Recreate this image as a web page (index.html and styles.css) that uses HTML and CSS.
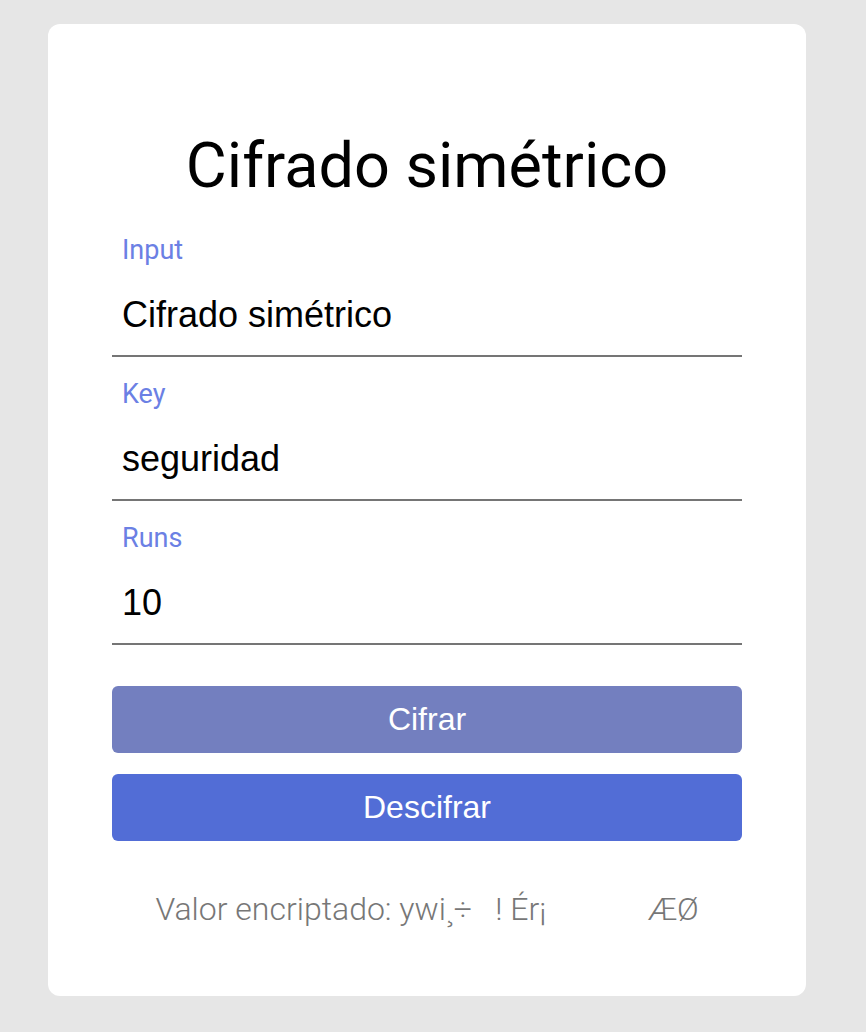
FILE: index.html
```html
<!DOCTYPE html>
<html lang="es">
<head>
<meta charset="utf-8">
<title>Cifrado simétrico</title>
<link rel="stylesheet" href="styles.css">
</head>
<body>
<main class="card">
  <h1 class="title">Cifrado simétrico</h1>
  <form class="form">
    <div class="field">
      <label class="label" for="input">Input</label>
      <input class="control" id="input" type="text" value="Cifrado simétrico">
    </div>
    <div class="field">
      <label class="label" for="key">Key</label>
      <input class="control" id="key" type="text" value="seguridad">
    </div>
    <div class="field">
      <label class="label" for="runs">Runs</label>
      <input class="control" id="runs" type="text" value="10">
    </div>
    <div class="actions">
      <button class="btn btn-encrypt" type="button">Cifrar</button>
      <button class="btn btn-decrypt" type="button">Descifrar</button>
    </div>
  </form>
  <p class="result">Valor encriptado: ywi¸÷&nbsp;&nbsp; ! Ér¡&nbsp;&nbsp;&nbsp;&nbsp;&nbsp;&nbsp;&nbsp;&nbsp;&nbsp;&nbsp;&nbsp;&nbsp; ÆØ</p>
</main>
</body>
</html>
```

FILE: styles.css
```css
html, body {
  margin: 0;
  padding: 0;
  background: #e6e6e6;
}

body {
  padding: 24px 0 36px 48px;
  font-family: Roboto, "Liberation Sans", sans-serif;
}

.card {
  box-sizing: border-box;
  width: 758px;
  background: #ffffff;
  border-radius: 12px;
  padding: 103px 64px 69px;
}

.title {
  margin: 0;
  font-family: Roboto, sans-serif;
  font-weight: 400;
  font-size: 63px;
  line-height: 77px;
  text-align: center;
  color: #000;
}

.form {
  margin: 30px 0 0;
}

.field {
  margin-top: 21px;
}

.field:first-child {
  margin-top: 0;
}

.label {
  display: block;
  padding-left: 10px;
  font-family: Roboto, sans-serif;
  font-size: 27px;
  line-height: 32px;
  color: #6b80e4;
}

.control {
  display: block;
  box-sizing: border-box;
  width: 100%;
  height: 91px;
  margin: 0;
  padding: 29px 10px 20px;
  border: 0;
  border-bottom: 2px solid #757575;
  background: transparent;
  font-family: "Liberation Sans", Arial, sans-serif;
  font-size: 36px;
  line-height: 40px;
  color: #000;
  outline: none;
}

.actions {
  display: flex;
  flex-direction: column;
  gap: 21px;
  margin-top: 41px;
}

.btn {
  height: 67px;
  border: 0;
  border-radius: 6px;
  font-family: "Liberation Sans", Arial, sans-serif;
  font-size: 32px;
  color: #ffffff;
  cursor: pointer;
}

.btn-encrypt {
  background: #737fbf;
}

.btn-decrypt {
  background: #526dd6;
}

.result {
  margin: 50px 0 0;
  font-family: Roboto, sans-serif;
  font-weight: 300;
  font-size: 32px;
  line-height: 36px;
  text-align: center;
  color: #777777;
  white-space: pre;
}
```
